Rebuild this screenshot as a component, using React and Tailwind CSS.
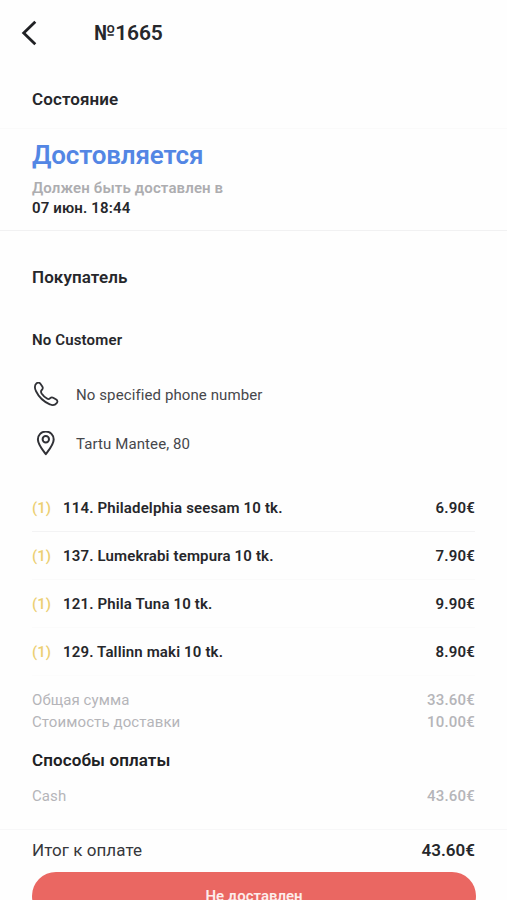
const items = [
  { name: '114. Philadelphia seesam 10 tk.', price: '6.90€', line: 'border-[#f3f3f4]' },
  { name: '137. Lumekrabi tempura 10 tk.', price: '7.90€', line: 'border-[#fafafa]' },
  { name: '121. Phila Tuna 10 tk.', price: '9.90€', line: 'border-[#fbfbfb]' },
  { name: '129. Tallinn maki 10 tk.', price: '8.90€', line: 'border-[#fcfcfc]' },
]

const BackIcon = () => (
  <svg className="w-6 h-7" viewBox="0 0 24 28" fill="none" stroke="#202124" strokeWidth="2.8">
    <path d="M17.3 1.7 5.7 13 17.3 24.3" />
  </svg>
)

const PhoneIcon = () => (
  <svg className="w-7 h-7" viewBox="0 2 28 28" fill="none" stroke="#303136" strokeWidth="1.8" strokeLinejoin="round">
    <path d="M4.6 3.2 C6.2 2.2 7.5 2.5 8.6 4 L10.3 6.5 C11.2 7.9 11 8.8 9.8 10 C8.8 11 8.7 12 9.6 13.4 C11.2 15.7 12.9 17.2 15 18.6 C16.3 19.5 17.3 19.2 18.2 18.2 C19.2 17.1 20.2 17 21.6 17.9 L24.2 19.6 C25.7 20.7 25.8 21.9 24.7 23.1 C23 25.2 20.6 25.6 17.8 24.3 C11.8 21.7 6.6 16.6 3.9 11 C2.5 7.8 2.6 4.9 4.6 3.2 Z" />
  </svg>
)

const PinIcon = () => (
  <svg className="w-7 h-7" viewBox="0 1 28 28" fill="none" stroke="#303136" strokeWidth="2" strokeLinejoin="round">
    <path d="M13.8 1.6 C9.2 1.6 5.9 5 5.9 9.4 C5.9 14.2 10 19.2 13.8 24.2 C17.6 19.2 21.7 14.2 21.7 9.4 C21.7 5 18.4 1.6 13.8 1.6 Z" />
    <circle cx="13.8" cy="9.2" r="3.2" />
  </svg>
)

const Header = () => (
  <header className="flex items-center h-[67px] pt-px pl-[18px]">
    <BackIcon />
    <h1 className="ml-[52px] text-[21px] font-semibold tracking-[-0.15px]">№1665</h1>
  </header>
)

const Status = () => (
  <section>
    <div className="flex items-center h-[62px] pt-1 px-8 border-b border-[#fafafa]">
      <h2 className="text-[17px] font-semibold tracking-[0.1px]">Состояние</h2>
    </div>
    <div className="h-[102px] px-8 pt-[11px] border-b border-[#f1f1f2]">
      <p className="h-[38px] leading-[30px] text-[26px] font-semibold tracking-[-0.16px] text-[#5386e4]">
        Достовляется
      </p>
      <p className="leading-5 text-[15px] font-semibold tracking-[0.13px] text-[#adadb0]">
        Должен быть доставлен в
      </p>
      <p className="leading-5 text-[15px] font-semibold tracking-[0.15px]">
        07 июн. 18:44
      </p>
    </div>
  </section>
)

const Customer = () => (
  <section className="px-8">
    <div className="flex items-center h-[92px] pt-0.5">
      <h2 className="text-[17px] font-semibold tracking-[0.1px]">Покупатель</h2>
    </div>
    <div className="flex items-center h-[35px]">
      <p className="text-[15px] font-semibold tracking-[0.15px]">No Customer</p>
    </div>
    <div className="flex items-center h-[49px] mt-[13px] text-[#46474b]">
      <PhoneIcon />
      <p className="ml-4 text-[15px] tracking-[0.1px]">No specified phone number</p>
    </div>
    <div className="flex items-center h-[49px] text-[#46474b]">
      <PinIcon />
      <p className="ml-4 text-[15px] tracking-[0.1px]">Tartu Mantee, 80</p>
    </div>
  </section>
)

const Items = () => (
  <ul className="mt-[15px] px-8">
    {items.map((item) => (
      <li key={item.name} className={`flex items-center h-12 pt-0.5 text-[15px] font-semibold border-b ${item.line}`}>
        <span className="w-[31px] font-medium text-[#eccf72]">(1)</span>
        <span className="flex-1 tracking-[0.15px]">{item.name}</span>
        <span className="tracking-[0.2px]">{item.price}</span>
      </li>
    ))}
  </ul>
)

const Totals = () => (
  <section className="pt-[9px]">
    <div className="px-8 text-[15px] text-[#b5b5b9]">
      <div className="flex items-center justify-between h-[22px] mt-1">
        <span className="tracking-[0.1px]">Общая сумма</span>
        <span className="font-medium tracking-[0.2px]">33.60€</span>
      </div>
      <div className="flex items-center justify-between h-[22px]">
        <span className="tracking-[0.1px]">Стоимость доставки</span>
        <span className="font-medium tracking-[0.2px]">10.00€</span>
      </div>
      <h2 className="flex items-center h-8 mt-3 text-[17px] font-semibold tracking-[0.1px] text-[#202124]">Способы оплаты</h2>
      <div className="flex items-center justify-between h-[38px]">
        <span className="tracking-[0.1px]">Cash</span>
        <span className="font-medium tracking-[0.2px]">43.60€</span>
      </div>
    </div>
    <div className="flex items-center justify-between h-[43px] mt-[14px] pb-px px-8 border-t border-[#f7f7f8]">
      <span className="text-[17px] tracking-[0.05px] text-[#36373b]">Итог к оплате</span>
      <span className="text-[17px] font-semibold">43.60€</span>
    </div>
  </section>
)

export default function App() {
  return (
    <div className="h-[900px] overflow-hidden bg-[#fefefe] text-[#26272b] font-['Roboto','Liberation_Sans',sans-serif]">
      <Header />
      <Status />
      <Customer />
      <Items />
      <Totals />
      <div className="pl-8 pr-[31px]">
        <button className="w-full h-12 rounded-full bg-[#ea6762] text-[15px] font-semibold text-[#fdeceb]">
          Не доставлен
        </button>
      </div>
    </div>
  )
}
